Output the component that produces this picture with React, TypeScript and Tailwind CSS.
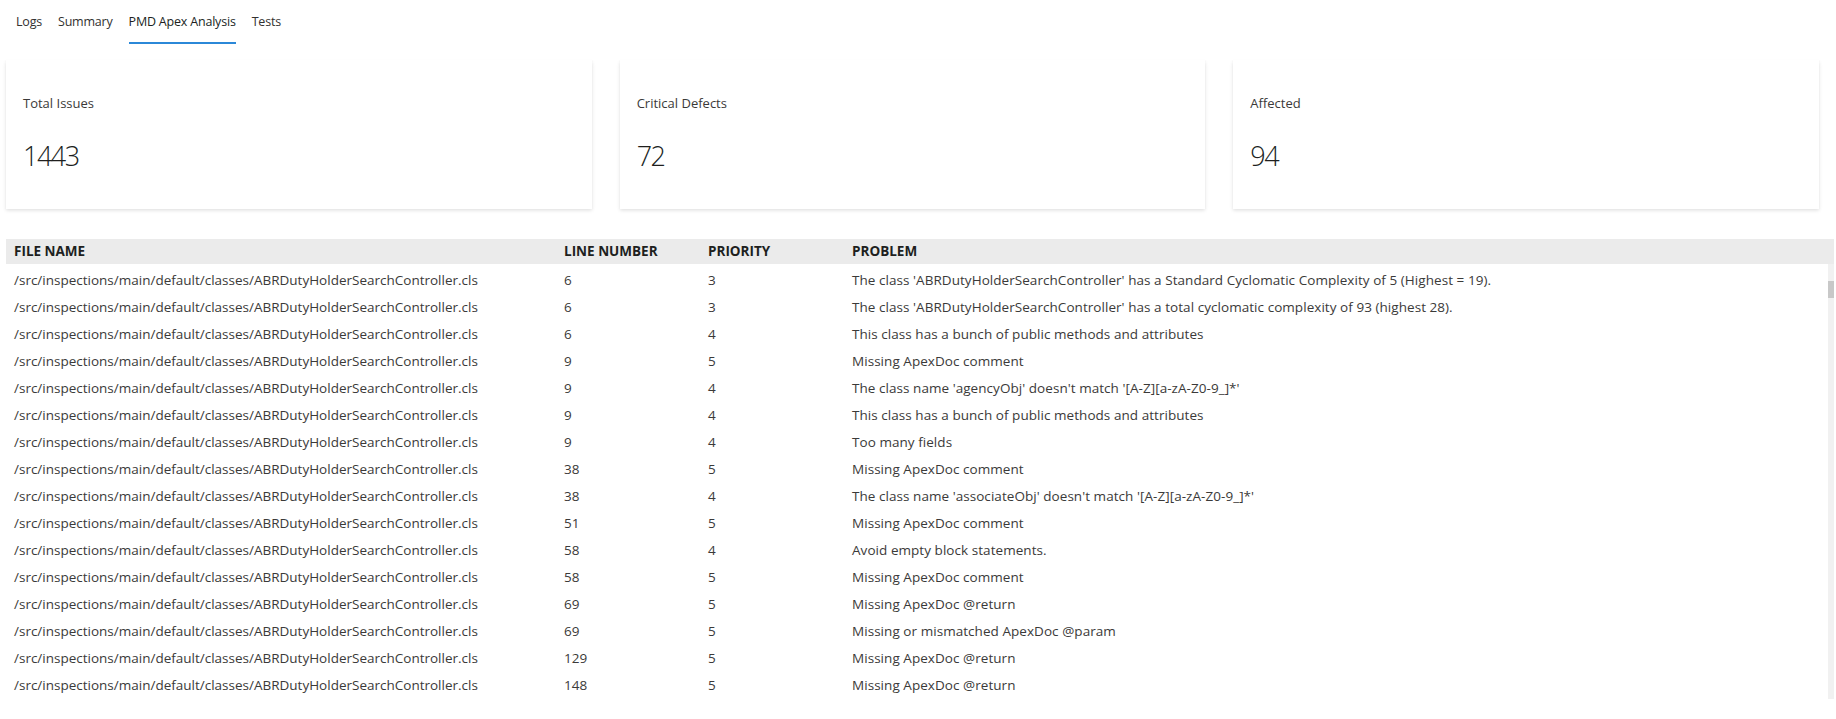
import React from "react";

type Issue = {
  file: string;
  line: number;
  priority: number;
  problem: string;
};

const FILE = "/src/inspections/main/default/classes/ABRDutyHolderSearchController.cls";

const issues: Issue[] = [
  { file: FILE, line: 6, priority: 3, problem: "The class 'ABRDutyHolderSearchController' has a Standard Cyclomatic Complexity of 5 (Highest = 19)." },
  { file: FILE, line: 6, priority: 3, problem: "The class 'ABRDutyHolderSearchController' has a total cyclomatic complexity of 93 (highest 28)." },
  { file: FILE, line: 6, priority: 4, problem: "This class has a bunch of public methods and attributes" },
  { file: FILE, line: 9, priority: 5, problem: "Missing ApexDoc comment" },
  { file: FILE, line: 9, priority: 4, problem: "The class name 'agencyObj' doesn't match '[A-Z][a-zA-Z0-9_]*'" },
  { file: FILE, line: 9, priority: 4, problem: "This class has a bunch of public methods and attributes" },
  { file: FILE, line: 9, priority: 4, problem: "Too many fields" },
  { file: FILE, line: 38, priority: 5, problem: "Missing ApexDoc comment" },
  { file: FILE, line: 38, priority: 4, problem: "The class name 'associateObj' doesn't match '[A-Z][a-zA-Z0-9_]*'" },
  { file: FILE, line: 51, priority: 5, problem: "Missing ApexDoc comment" },
  { file: FILE, line: 58, priority: 4, problem: "Avoid empty block statements." },
  { file: FILE, line: 58, priority: 5, problem: "Missing ApexDoc comment" },
  { file: FILE, line: 69, priority: 5, problem: "Missing ApexDoc @return" },
  { file: FILE, line: 69, priority: 5, problem: "Missing or mismatched ApexDoc @param" },
  { file: FILE, line: 129, priority: 5, problem: "Missing ApexDoc @return" },
  { file: FILE, line: 148, priority: 5, problem: "Missing ApexDoc @return" },
];

const tabs = ["Logs", "Summary", "PMD Apex Analysis", "Tests"];

const stats = [
  { label: "Total Issues", value: "1443" },
  { label: "Critical Defects", value: "72" },
  { label: "Affected", value: "94" },
];

function StatCard({ label, value }: { label: string; value: string }) {
  return (
    <div className="h-[149px] flex-1 bg-white px-[17px] pt-[34px] shadow-[0_1.6px_3.6px_rgba(0,0,0,0.13),0_0.3px_0.9px_rgba(0,0,0,0.11)]">
      <p className="text-[13px] leading-[18px] text-[#3b3a39]">{label}</p>
      <p className="mt-[27px] text-[27px] font-light leading-[34px] tracking-[-1.5px] text-[#201f1e]">{value}</p>
    </div>
  );
}

export default function App() {
  return (
    <div className="h-[719px] overflow-hidden bg-white font-['Open_Sans','Noto_Sans',sans-serif] text-[#323130]">
      <nav className="flex h-[44px] items-stretch gap-[16px] pl-[16px]">
        {tabs.map((tab) => {
          const active = tab === "PMD Apex Analysis";
          return (
            <div
              key={tab}
              className={`flex items-center border-b-2 pt-[2px] text-[12.5px] tracking-[-0.2px] ${
                active ? "border-[#2b88d8] text-[#201f1e]" : "border-transparent text-[#323130]"
              }`}
            >
              {tab}
            </div>
          );
        })}
      </nav>

      <div className="mt-[16px] flex gap-[28px] pl-[6px] pr-[17px]">
        {stats.map((s) => (
          <StatCard key={s.label} label={s.label} value={s.value} />
        ))}
      </div>

      <div className="mt-[30px] ml-[6px] mr-[2px]">
        <div className="flex h-[25px] items-center bg-[#ebebeb] text-[13.5px] font-bold uppercase text-[#201f1e]">
          <div className="w-[550px] px-2">File Name</div>
          <div className="w-[144px] px-2">Line Number</div>
          <div className="w-[144px] px-2">Priority</div>
          <div className="flex-1 px-2">Problem</div>
        </div>

        <div className="flex">
          <div className="flex-1 pt-[3px]">
            {issues.map((issue, i) => (
              <div key={i} className="flex h-[27px] items-center text-[13.5px] text-[#3b3a39]">
                <div className="w-[550px] truncate px-2">{issue.file}</div>
                <div className="w-[144px] px-2">{issue.line}</div>
                <div className="w-[144px] px-2">{issue.priority}</div>
                <div className="flex-1 truncate px-2 tracking-[0.05px]">{issue.problem}</div>
              </div>
            ))}
          </div>
          <div className="w-[6px] bg-[#f1f1f1] pt-[17px]">
            <div className="h-[17px] bg-[#c8c8c8]" />
          </div>
        </div>
      </div>
    </div>
  );
}
